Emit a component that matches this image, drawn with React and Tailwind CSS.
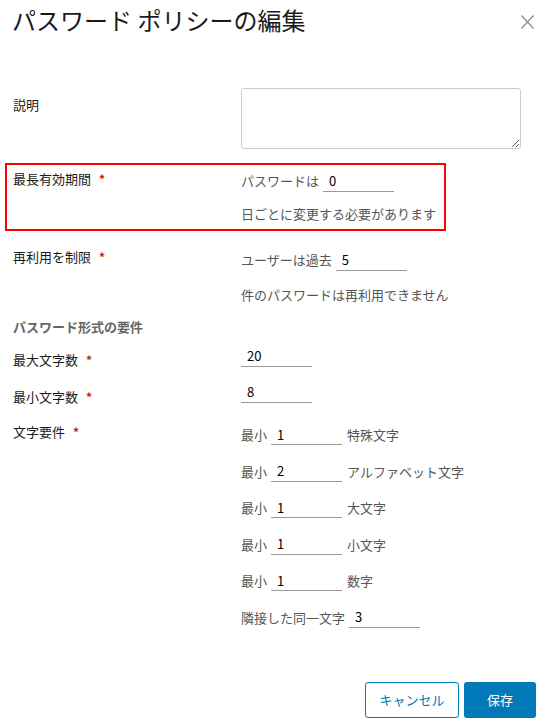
import React from "react";

function Field({ value, size = "h-[22px]", className = "" }) {
  return (
    <input
      readOnly
      value={value}
      className={`w-[71px] ${size} ${className} shrink-0 border-0 border-b border-[#9a9a9a] bg-transparent pl-[6px] text-[13px] leading-[20px] text-black outline-none`}
    />
  );
}

function Req() {
  return <span className="ml-[8px] text-[12px] font-bold text-[#c92100]">*</span>;
}

const MIN_ROWS = [
  { value: "1", label: "特殊文字" },
  { value: "2", label: "アルファベット文字" },
  { value: "1", label: "大文字" },
  { value: "1", label: "小文字" },
  { value: "1", label: "数字" },
];

export default function App() {
  return (
    <div className="min-h-[724px] w-[546px] bg-white font-['Noto_Sans_CJK_JP',sans-serif] text-[13px] leading-[20px] text-[#1a1a1a]">
      <header className="flex h-[36px] items-start justify-between pl-[12px] pr-[12px] pt-[4px]">
        <h1 className="text-[24px] font-normal leading-[32px] text-[#1a1a1a]">
          パスワード ポリシーの編集
        </h1>
        <button className="mt-[11px] text-[#8a8a8a]" aria-label="閉じる">
          <svg width="13" height="14" viewBox="0 0 13 14" fill="none">
            <path d="M0.5 0.5L12.5 13.5M12.5 0.5L0.5 13.5" stroke="currentColor" strokeWidth="1.2" />
          </svg>
        </button>
      </header>

      {/* 説明 */}
      <div className="mt-[52px] flex h-[61px]">
        <div className="w-[241px] shrink-0 pl-[13px] pt-[7px]">説明</div>
        <textarea className="h-[61px] w-[280px] rounded-[3px] border border-[#cccccc] outline-none" />
      </div>

      {/* 最長有効期間 (highlighted) */}
      <div className="ml-[5px] mt-[14px] flex h-[68px] w-[441px] border-2 border-[#ff0000]">
        <div className="w-[234px] shrink-0 pl-[6px] pt-[4px]">
          最長有効期間
          <Req />
        </div>
        <div className="pt-[5px] text-[#565656]">
          <div className="flex h-[22px] items-center">
            <span>パスワードは</span>
            <Field value="0" className="ml-[4px]" />
          </div>
          <div className="mt-[12px]">日ごとに変更する必要があります</div>
        </div>
      </div>

      {/* 再利用を制限 */}
      <div className="mt-[16px] flex h-[58px]">
        <div className="w-[241px] shrink-0 pl-[13px]">
          再利用を制限
          <Req />
        </div>
        <div className="pt-[2px] text-[#565656]">
          <div className="flex h-[22px] items-center">
            <span>ユーザーは過去</span>
            <Field value="5" className="ml-[4px]" />
          </div>
          <div className="mt-[14px]">件のパスワードは再利用できません</div>
        </div>
      </div>

      <div className="mt-[12px] h-[20px] pl-[13px] font-bold text-[#666666]">パスワード形式の要件</div>

      {/* 最大文字数 */}
      <div className="mt-[8px] flex h-[22px]">
        <div className="w-[241px] shrink-0 pl-[13px] pt-[5px]">
          最大文字数
          <Req />
        </div>
        <Field value="20" />
      </div>

      {/* 最小文字数 */}
      <div className="mt-[14px] flex h-[22px]">
        <div className="w-[241px] shrink-0 pl-[13px] pt-[6px]">
          最小文字数
          <Req />
        </div>
        <Field value="8" />
      </div>

      {/* 文字要件 */}
      <div className="mt-[19px] flex">
        <div className="w-[241px] shrink-0 pl-[13px]">
          文字要件
          <Req />
        </div>
        <div className="flex flex-col gap-[16.6px] pt-[3px] text-[#565656]">
          {MIN_ROWS.map((row, i) => (
            <div key={i} className="flex h-[20px] items-center">
              <span>最小</span>
              <Field value={row.value} size="h-[20px]" className="ml-[4px]" />
              <span className="ml-[5px]">{row.label}</span>
            </div>
          ))}
          <div className="flex h-[20px] items-center">
            <span>隣接した同一文字</span>
            <Field value="3" size="h-[20px]" className="ml-[4px]" />
          </div>
        </div>
      </div>

      <div className="mt-[54px] flex justify-end gap-[5px] pr-[10px]">
        <button className="h-[36px] w-[94px] rounded-[3px] border border-[#0079b8] bg-white text-[13px] text-[#0079b8]">
          キャンセル
        </button>
        <button className="h-[36px] w-[72px] rounded-[3px] bg-[#0079b8] text-[13px] text-white">
          保存
        </button>
      </div>
    </div>
  );
}
